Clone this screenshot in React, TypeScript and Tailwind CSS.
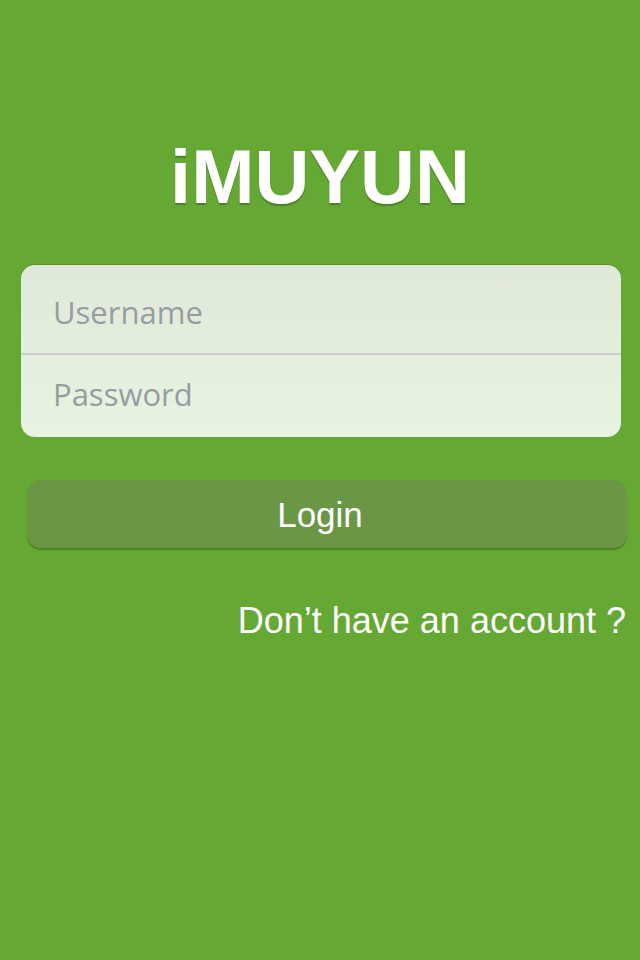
import * as React from 'react';

export default function App() {
  return (
    <div className="w-[640px] h-[960px] bg-[#66a834] flex flex-col font-['Liberation_Sans',Arial,sans-serif]">
      {/* Logo */}
      <h1 className="mt-[133px] h-[88px] text-center text-[76px] leading-[88px] font-bold text-white [text-shadow:0_2px_1px_rgba(0,0,0,0.25)]">
        iMUYUN
      </h1>

      {/* Credentials card */}
      <div className="mt-[44px] ml-[21px] w-[600px] h-[172px] rounded-[14px] bg-gradient-to-b from-[#e0e9d9] to-[#e8f3e2] shadow-[0_-1px_0_rgba(0,0,0,0.12)] flex flex-col font-['Open_Sans',sans-serif] text-[31px] text-[#979da1]">
        <div className="h-[90px] flex items-center pl-[32px] pt-[6px] border-b-[2px] border-[#cacbc8]">
          Username
        </div>
        <div className="flex-1 flex items-center pl-[32px] pb-[4px]">Password</div>
      </div>

      {/* Login button */}
      <button className="mt-[43px] ml-[27px] w-[600px] h-[68px] rounded-[14px] bg-[#6a9646] shadow-[0_2px_1px_rgba(60,110,30,0.6)] text-white text-[35px] flex items-center justify-center">
        <span className="mr-[14px] mt-[2px]">Login</span>
      </button>

      <div className="mt-[46px] pr-[14px] text-right text-[36px] text-white">
        Don’t have an account ?
      </div>
    </div>
  );
}
